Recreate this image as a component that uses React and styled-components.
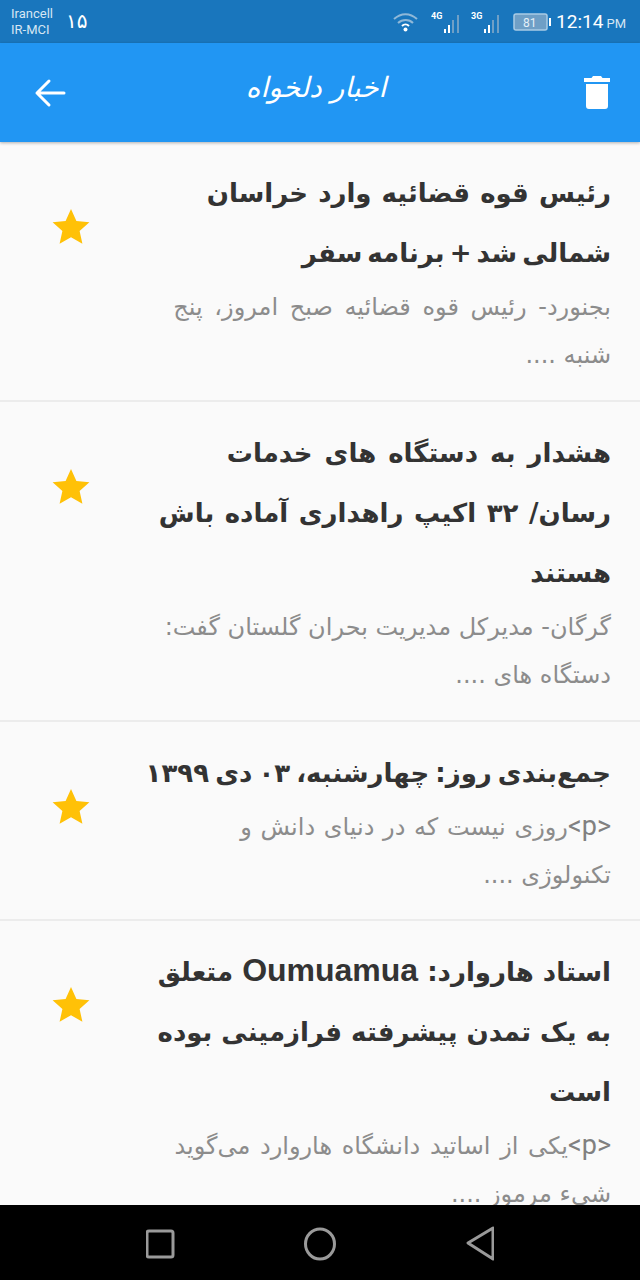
import React from "react";
import styled, { createGlobalStyle } from "styled-components";

const Global = createGlobalStyle`
  html, body { margin: 0; padding: 0; background: #fafafa; }
  * { box-sizing: border-box; }
`;
const Screen = styled.div`
  width: 640px; height: 1280px; display: flex; flex-direction: column; overflow: hidden;
  background: #fafafa; font-family: "DejaVu Sans", "Noto Sans", sans-serif;
`;
const StatusBar = styled.div`
  height: 43px; flex: none; background: #1976bd; color: #fff; display: flex; align-items: center;
  justify-content: space-between; padding: 0 14px 0 11px; font-family: Roboto, sans-serif;
`;
const Group = styled.div`display: flex; align-items: center; gap: ${p => p.$gap || 0}px;`;
const Carrier = styled.div`font-size: 13px; line-height: 16px; color: #d6e6f3;`;
const Day = styled.div`font-family: "DejaVu Sans", sans-serif; font-size: 20px; padding-bottom: 2px;`;
const Clock = styled.div`font-size: 19px; span { font-size: 13px; margin-left: 3px; color: #d6e6f3; }`;
const StatusIcon = styled.span`display: flex; margin-right: ${p => p.$after}px;`;
const AppBar = styled.header`
  height: 99px; flex: none; background: #2196f3; display: flex; align-items: center; justify-content: space-between;
  padding: 0 30px 0 34px; box-shadow: 0 1px 3px rgba(0,0,0,.3); position: relative; z-index: 1;
`;
const Title = styled.h1`
  margin: 0 18px 10px 0; color: #fff; font-size: 28px; font-weight: 400; font-style: italic; direction: rtl;
`;
const List = styled.main`flex: 1; overflow: hidden; min-height: 0;`;
const Row = styled.article`
  display: flex; padding: 21px 29px ${p => p.$pb}px 0; border-bottom: 2px solid #ececec;
`;
const StarCell = styled.div`width: 142px; flex: none; display: flex; justify-content: center; margin-top: ${p => p.$top}px;`;
const Body = styled.div`flex: 1; direction: rtl; min-width: 0;`;
const Head = styled.h2`margin: 0; font-size: 26px; line-height: 60px; font-weight: 700; color: #333; white-space: nowrap;`;
const Desc = styled.p`margin: 1px 0 0; font-size: 24px; line-height: 47.500px; color: #8c8c8c; white-space: nowrap;`;
const Line = styled.span`display: block; word-spacing: ${p => p.$ws || 0}px;`;
const Latin = styled.span`font-family: "Liberation Sans", sans-serif; font-size: 32px; font-weight: 700; line-height: 0;`;
const Tag = styled.span`font-family: Roboto, sans-serif; font-size: 27px; color: #808080; line-height: 0;`;
const Nav = styled.nav`
  height: 75px; flex: none; background: #000; display: flex; align-items: center; justify-content: center; gap: 126px; padding-top: 2px;
`;

const Star = () => (
  <svg width="38" height="36" viewBox="0 0 38 36"><path fill="#ffc107" d="M19 1l5.400 12 13 1.300-9.800 8.700 2.800 12.800L19 29.200 7.600 35.800l2.800-12.800L.6 14.300l13-1.300z"/></svg>
);

const Net = ({ label }) => (
  <svg width="34" height="24" viewBox="0 0 34 24">
    <text x="0" y="9" fontSize="9" fontWeight="700" fill="#fff" fontFamily="Roboto">{label}</text>
    <path fill="#fff" d="M13 19h2v4h-2zM17 15h2v8h-2z"/>
    <path fill="#6f9fc6" d="M21 10h2v13h-2zM26 5h2v18h-2z"/>
  </svg>
);

const items = [
  { top: 45, pb: 21, h: [["رئیس قوه قضائیه وارد خراسان", 1], ["شمالی شد + برنامه سفر", -4]], d: [["بجنورد- رئیس قوه قضائیه صبح امروز، پنج", 4], ["شنبه ....", 0]] },
  { top: 45, pb: 21, h: [["هشدار به دستگاه های خدمات", 3], ["رسان/ ۳۲ اکیپ راهداری آماده باش", 1.500], ["هستند", 0]], d: [["گرگان- مدیرکل مدیریت بحران گلستان گفت:", 0], ["دستگاه های ....", 0]] },
  { top: 45, pb: 20, h: [["جمع‌بندی روز: چهارشنبه، ۰۳ دی ۱۳۹۹", -3]], d: [[<><Tag>{"<p>"}</Tag>روزی نیست که در دنیای دانش و</>, 1], ["تکنولوژی ....", 0]] },
  { top: 44, pb: 21, h: [[<>استاد هاروارد: <Latin>Oumuamua</Latin> متعلق</>, 0], ["به یک تمدن پیشرفته فرازمینی بوده", 0], ["است", 0]], d: [[<><Tag>{"<p>"}</Tag>یکی از اساتید دانشگاه هاروارد می‌گوید</>, 2], ["شیء مرموز ....", 0]] },
];

const lines = arr => arr.map(([t, ws], i) => <Line key={i} $ws={ws}>{t}</Line>);

export default function App() {
  return (
    <Screen>
      <Global />
      <StatusBar>
        <Group $gap={13}>
          <Carrier>Irancell<br />IR-MCI</Carrier>
          <Day>۱۵</Day>
        </Group>
        <Group>
          <StatusIcon $after={12}>
            <svg width="26" height="20" viewBox="0 0 26 20" fill="none" stroke="#8fb8d8" strokeWidth="2"><path d="M1 7c7-6.500 16-6.500 23 0M5 11c4.500-4 11-4 15 0"/><path d="M9 14c2-2 5-2 7 0" stroke="#fff"/><circle cx="12.500" cy="17.500" r="2" fill="#fff" stroke="none"/></svg>
          </StatusIcon>
          <StatusIcon $after={6}><Net label="4G" /></StatusIcon>
          <StatusIcon $after={8}><Net label="3G" /></StatusIcon>
          <StatusIcon $after={5}>
            <svg width="38" height="20" viewBox="0 0 38 20"><rect x="1" y="2" width="33" height="16" rx="2" fill="#6f9fc6" stroke="#a9cbe5" strokeWidth="1.500"/><text x="10" y="15" fontSize="12" fill="#e6f0f8" fontFamily="Roboto">81</text><rect x="36" y="6" width="2" height="8" fill="#fff"/></svg>
          </StatusIcon>
          <Clock>12:14<span>PM</span></Clock>
        </Group>
      </StatusBar>
      <AppBar>
        <svg width="32" height="32" viewBox="0 0 32 32" fill="none" stroke="#fff" strokeWidth="3" strokeLinecap="round" strokeLinejoin="round"><path d="M30 16H3M15 4 3 16l12 12"/></svg>
        <Title>اخبار دلخواه</Title>
        <svg width="26" height="33" viewBox="0 0 26 33" fill="#fff"><path d="M9 0h8l1.500 2H26v4H0V2h7.500zM2 8h22v22a3 3 0 0 1-3 3H5a3 3 0 0 1-3-3z"/></svg>
      </AppBar>
      <List>
        {items.map((it, i) => (
          <Row key={i} $pb={it.pb}>
            <StarCell $top={it.top}><Star /></StarCell>
            <Body>
              <Head>{lines(it.h)}</Head>
              <Desc>{lines(it.d)}</Desc>
            </Body>
          </Row>
        ))}
      </List>
      <Nav>
        <svg width="30" height="32" viewBox="1 0 30 32" fill="none" stroke="#9a9a9a" strokeWidth="3"><rect x="2" y="3" width="26" height="26" rx="2"/></svg>
        <svg width="34" height="34" viewBox="-1 0 34 34" fill="none" stroke="#9a9a9a" strokeWidth="3"><ellipse cx="17" cy="17" rx="14.500" ry="15"/></svg>
        <svg width="32" height="36" viewBox="-3 0 32 36" fill="none" stroke="#9a9a9a" strokeWidth="3" strokeLinejoin="round"><path d="M28 2v31L3 17z"/></svg>
      </Nav>
    </Screen>
  );
}
